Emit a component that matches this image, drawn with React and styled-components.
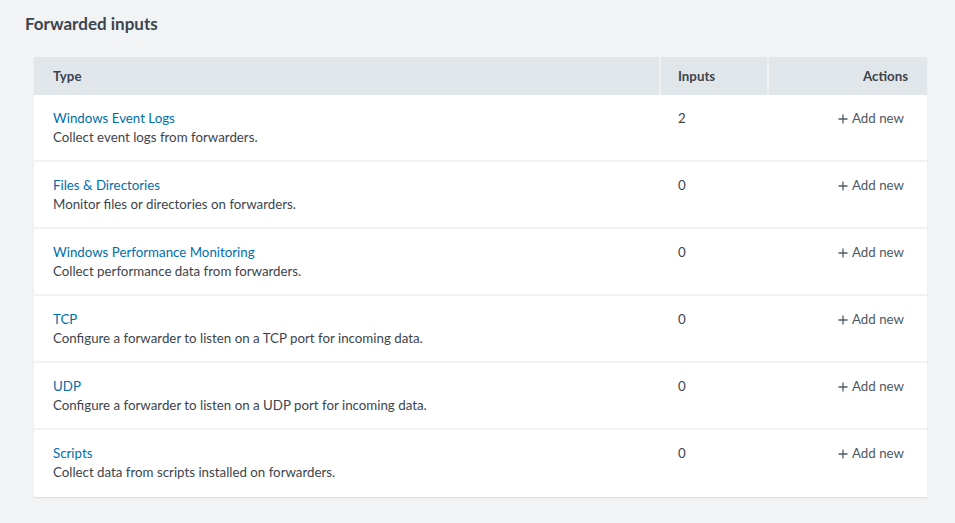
import React from "react";
import styled, { createGlobalStyle } from "styled-components";

const Global = createGlobalStyle`
  html, body { margin: 0; padding: 0; background: #f2f3f5; }
  body { font-family: Lato, "Open Sans", "Liberation Sans", sans-serif; color: #3c444d; }
`;

const Page = styled.div`
  padding: 13px 28px 26px 25px;
`;

const Title = styled.h1`
  margin: 0 0 22px 0;
  font-size: 17px;
  font-weight: 700;
  line-height: 22px;
  color: #3c444d;
`;

const Table = styled.div`
  margin-left: 9px;
  width: 893px;
  background: #fff;
  box-shadow: 0 1px 1px rgba(0, 0, 0, 0.08);
`;

const Grid = styled.div`
  display: grid;
  grid-template-columns: 625px 108px 160px;
`;

const HeadRow = styled(Grid)`
  height: 38px;
  background: #e1e6eb;
`;

const HeadCell = styled.div`
  display: flex;
  align-items: center;
  justify-content: ${(p) => (p.$right ? "flex-end" : "flex-start")};
  padding: 0 ${(p) => (p.$right ? "19px" : p.$sep ? "17px" : "19px")};
  font-size: 13.3px;
  font-weight: 700;
  color: #3c444d;
  border-left: ${(p) => (p.$sep ? "2px solid #eef1f4" : "none")};
`;

const Row = styled(Grid)`
  height: 67px;
  box-sizing: border-box;
  border-bottom: ${(p) => (p.$last ? "none" : "2px solid #f0f2f4")};
`;

const Cell = styled.div`
  padding: 14px 19px 0;
  font-size: 13.3px;
  line-height: 19px;
  text-align: ${(p) => (p.$right ? "right" : "left")};
  padding-right: ${(p) => (p.$right ? "23px" : "19px")};
`;

const Link = styled.a`
  display: block;
  color: #006eaa;
  text-decoration: none;
  cursor: pointer;
`;

const Desc = styled.div`
  color: #3c444d;
`;

const Action = styled.a`
  display: inline-flex;
  align-items: center;
  gap: 4px;
  color: #4f5964;
  text-decoration: none;
  cursor: pointer;
  svg { margin-top: 1px; }
`;

const Plus = () => (
  <svg width="10" height="10" viewBox="0 0 10 10" aria-hidden="true">
    <path d="M5 0.5v9M0.5 5h9" stroke="#4f5964" strokeWidth="1.3" fill="none" />
  </svg>
);

const rows = [
  ["Windows Event Logs", "Collect event logs from forwarders.", 2],
  ["Files & Directories", "Monitor files or directories on forwarders.", 0],
  ["Windows Performance Monitoring", "Collect performance data from forwarders.", 0],
  ["TCP", "Configure a forwarder to listen on a TCP port for incoming data.", 0],
  ["UDP", "Configure a forwarder to listen on a UDP port for incoming data.", 0],
  ["Scripts", "Collect data from scripts installed on forwarders.", 0],
];

export default function App() {
  return (
    <>
      <Global />
      <Page>
        <Title>Forwarded inputs</Title>
        <Table>
          <HeadRow>
            <HeadCell>Type</HeadCell>
            <HeadCell $sep>Inputs</HeadCell>
            <HeadCell $sep $right>Actions</HeadCell>
          </HeadRow>
          {rows.map(([name, desc, n], i) => (
            <Row key={name} $last={i === rows.length - 1}>
              <Cell>
                <Link>{name}</Link>
                <Desc>{desc}</Desc>
              </Cell>
              <Cell>{n}</Cell>
              <Cell $right>
                <Action><Plus />Add new</Action>
              </Cell>
            </Row>
          ))}
        </Table>
      </Page>
    </>
  );
}
